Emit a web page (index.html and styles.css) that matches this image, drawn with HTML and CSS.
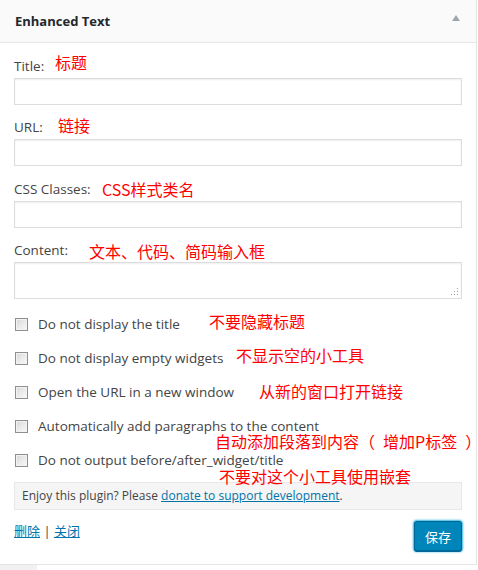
FILE: index.html
```html
<!DOCTYPE html>
<html lang="zh-CN">
<head>
    <meta charset="UTF-8">
    <meta name="viewport" content="width=device-width, initial-scale=1.0">
    <title>Enhanced Text</title>
    <link rel="stylesheet" href="styles.css">
</head>
<body>
    <div class="widget">
        <div class="widget-top">
            <h3>Enhanced Text</h3>
            <span class="toggle"></span>
        </div>
        <div class="widget-inside">
            <p class="field">
                <label for="title">Title:</label>
                <span class="note note-title">标题</span>
                <input type="text" id="title">
            </p>
            <p class="field">
                <label for="url">URL:</label>
                <span class="note note-url">链接</span>
                <input type="text" id="url">
            </p>
            <p class="field field-css">
                <label for="classes">CSS Classes:</label>
                <span class="note note-css">CSS样式类名</span>
                <input type="text" id="classes">
            </p>
            <p class="field">
                <label for="content">Content:</label>
                <span class="note note-content">文本、代码、简码输入框</span>
                <span class="area">
                    <textarea id="content"></textarea>
                </span>
            </p>

            <div class="checks">
                <label class="check">
                    <input type="checkbox"> Do not display the title
                    <span class="note note-c1">不要隐藏标题</span>
                </label>
                <label class="check">
                    <input type="checkbox"> Do not display empty widgets
                    <span class="note note-c2">不显示空的小工具</span>
                </label>
                <label class="check">
                    <input type="checkbox"> Open the URL in a new window
                    <span class="note note-c3">从新的窗口打开链接</span>
                </label>
                <label class="check">
                    <input type="checkbox"> Automatically add paragraphs to the content
                    <span class="note note-c4">自动添加段落到内容（&ensp;增加P标签&ensp;）</span>
                </label>
                <label class="check">
                    <input type="checkbox"> Do not output before/after_widget/title
                    <span class="note note-c5">不要对这个小工具使用嵌套</span>
                </label>
            </div>

            <div class="donate">
                Enjoy this plugin? Please <a href="#">donate to support development</a>.
            </div>

            <div class="actions">
                <div class="links">
                    <a href="#">删除</a> | <a href="#">关闭</a>
                </div>
                <button class="save">保存</button>
            </div>
        </div>
    </div>
    <div class="below">
        <div class="below-side"></div>
    </div>
</body>
</html>
```

FILE: styles.css
```css
body {
    margin: 0;
    background-color: #fff;
    color: #444;
    font-family: "Open Sans", "Noto Sans CJK SC", sans-serif;
    font-size: 13.5px;
}
.widget {
    width: 476px;
    background-color: #fff;
    border-right: 1px solid #e5e5e5;
    border-bottom: 1px solid #e5e5e5;
}
.widget-top {
    height: 42px;
    display: flex;
    align-items: center;
    justify-content: space-between;
    padding: 0 16px 0 15px;
    background-color: #fafafa;
    border-bottom: 1px solid #e5e5e5;
}
.widget-top h3 {
    margin: 0;
    font-size: 13px;
    font-weight: bold;
    color: #23282d;
}
.toggle {
    width: 0;
    height: 0;
    border-left: 4px solid transparent;
    border-right: 4px solid transparent;
    border-bottom: 6px solid #a0a5aa;
    margin-top: -6px;
}
.widget-inside {
    padding: 0 14px 13px 14px;
}
.field {
    position: relative;
    margin: 13px 0 0;
}
.field:first-child {
    margin-top: 14px;
}
.field-css {
    margin-top: 14px;
}
.field label {
    display: block;
    line-height: 18px;
}
.field input,
.field textarea {
    display: block;
    box-sizing: border-box;
    width: 100%;
    margin: 3px 0 0;
    border: 1px solid #ddd;
    box-shadow: inset 0 1px 2px rgba(0, 0, 0, 0.07);
    background-color: #fff;
    font-family: inherit;
}
.field input {
    height: 27px;
}
.field textarea {
    height: 37px;
    resize: none;
}
.area {
    position: relative;
    display: block;
}
/* grip dots in the textarea corner */
.area::after {
    content: "";
    position: absolute;
    right: 4px;
    bottom: 4px;
    width: 7px;
    height: 7px;
    background:
        linear-gradient(#999, #999) 6px 0 / 1px 1px no-repeat,
        linear-gradient(#999, #999) 3px 3px / 1px 1px no-repeat,
        linear-gradient(#999, #999) 6px 3px / 1px 1px no-repeat,
        linear-gradient(#999, #999) 0 6px / 1px 1px no-repeat,
        linear-gradient(#999, #999) 3px 6px / 1px 1px no-repeat,
        linear-gradient(#999, #999) 6px 6px / 1px 1px no-repeat;
}

/* red notes written over the screenshot */
.note {
    position: absolute;
    color: #f00;
    font-family: "Noto Sans CJK SC", sans-serif;
    font-size: 16px;
    line-height: 16px;
    white-space: nowrap;
}
.note-title { left: 41px; top: -3px; }
.note-url { left: 44px; top: -1px; }
.note-css { left: 88px; top: 1px; }
.note-content { left: 75px; top: 2px; }
.note-c1 { left: 195px; top: 6px; }
.note-c2 { left: 222px; top: 6px; }
.note-c3 { left: 245px; top: 8px; }
.note-c4 { left: 201px; top: 24px; }
.note-c5 { left: 205px; top: 25px; }

.checks {
    margin-top: 8px;
}
.check {
    position: relative;
    display: flex;
    align-items: center;
    height: 34px;
}
.check input {
    appearance: none;
    width: 13px;
    height: 13px;
    margin: 0 10px 0 1px;
    border: 1px solid #8f8f8f;
    background: linear-gradient(135deg, #d8d8d8, #fbfbfb);
    box-shadow: inset 0 0 0 1px #f2f2f2;
}
.donate {
    margin-top: 5px;
    padding: 5px 7px;
    line-height: 16px;
    font-size: 12px;
    background-color: #f5f5f5;
    border: 1px solid #e8e8e8;
}
a {
    color: #0073aa;
}
.actions {
    display: flex;
    justify-content: space-between;
    align-items: flex-start;
    margin-top: 11px;
}
.links {
    margin-top: 1px;
    line-height: 18px;
    font-size: 13px;
}
.save {
    width: 48px;
    height: 30px;
    padding: 0;
    border: 1px solid #006799;
    border-radius: 3px;
    background-color: #0085ba;
    color: #fff;
    font-family: inherit;
    font-size: 13px;
    box-shadow: 0 1px 0 #006799, 0 0 2px 1px #33b3db;
    cursor: pointer;
}
.below {
    height: 6px;
}
.below-side {
    width: 37px;
    height: 6px;
    background-color: #f1f1f1;
}
```
